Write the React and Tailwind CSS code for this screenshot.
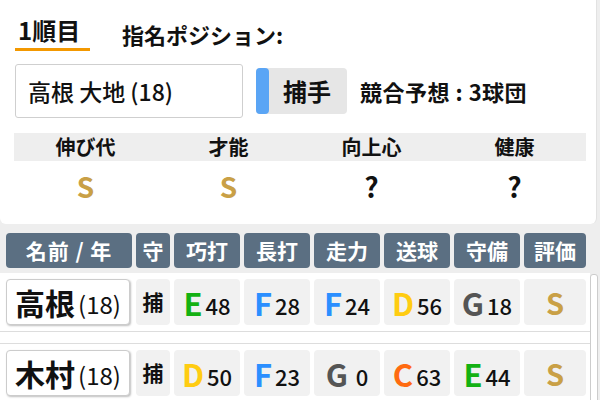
import React from "react";

const FONT = { fontFamily: '"Noto Sans CJK JP", "Noto Sans", sans-serif' };

const gradeColor = {
  S: "text-[#c9a046]",
  E: "text-[#13b113]",
  F: "text-[#2b8fff]",
  D: "text-[#ffcc11]",
  C: "text-[#ff6a10]",
  G: "text-[#555555]",
};

const rows = [
  { name: "高根", age: "(18)", pos: "捕", stats: [["E", "48"], ["F", "28"], ["F", "24"], ["D", "56"], ["G", "18"]], eval: "S" },
  { name: "木村", age: "(18)", pos: "捕", stats: [["D", "50"], ["F", "23"], ["G", " 0"], ["C", "63"], ["E", "44"]], eval: "S" },
];

function Header() {
  const h = "h-[35px] rounded-[4px] bg-[#5b6f82] text-white text-[21px] font-bold flex items-center justify-center leading-none";
  return (
    <div className="flex pl-[6px] gap-[4px] mt-[9px]">
      <div className={`${h} w-[126px] tracking-[1px]`}>名前 / 年</div>
      <div className={`${h} w-[34px]`}>守</div>
      <div className={`${h} w-[66px]`}>巧打</div>
      <div className={`${h} w-[66px]`}>長打</div>
      <div className={`${h} w-[66px]`}>走力</div>
      <div className={`${h} w-[66px]`}>送球</div>
      <div className={`${h} w-[66px]`}>守備</div>
      <div className={`${h} w-[62px]`}>評価</div>
    </div>
  );
}

function Row({ r, first }) {
  const cell = "h-[46px] rounded-[4px] bg-[#f1f1f1] flex items-center justify-center";
  return (
    <div className={`flex pl-[6px] gap-[4px] py-[6px] ${first ? "border-b border-[#dddddd]" : "border-t border-[#dddddd]"}`}>
      <div className="w-[124px] mr-[2px] h-[46px] rounded-[4px] bg-white border border-[#cccccc] shadow-[1px_1px_2px_rgba(0,0,0,0.25)] flex items-center justify-center">
        <span className="text-[30px] font-bold text-[#111] leading-none">{r.name}</span>
        <span className="text-[24px] text-[#111] leading-none ml-[3px] mt-[4px]">{r.age}</span>
      </div>
      <div className={`${cell} w-[34px] text-[21px] font-bold text-[#111]`}>{r.pos}</div>
      {r.stats.map(([g, n], i) => (
        <div key={i} className={`${cell} w-[66px]`}>
          <span className={`text-[31px] font-bold leading-none ${gradeColor[g]}`}>{g}</span>
          <span className="text-[22px] font-medium text-[#111] leading-none ml-[3px] mt-[6px] whitespace-pre">{n}</span>
        </div>
      ))}
      <div className={`${cell} w-[62px]`}>
        <span className={`text-[29px] font-bold leading-none ${gradeColor[r.eval]}`}>{r.eval}</span>
      </div>
    </div>
  );
}

export default function App() {
  return (
    <div className="w-[600px] h-[400px] bg-[#eeeeee] overflow-hidden" style={FONT}>
      <div className="w-[597px] h-[224px] bg-white rounded-b-[6px] border-r border-[#e2e2e2]">
        <div className="flex items-end pt-[14px] pl-[15px]">
          <div className="w-[75px] border-b-[3px] border-[#f39800] pb-[2px] pl-[3px] text-[24px] font-bold text-[#111] leading-[32px]">1順目</div>
          <div className="ml-[32px] pb-[3px] text-[22px] font-bold text-[#111] leading-[28px]">指名ポジション:</div>
        </div>
        <div className="flex items-center pl-[15px] mt-[13px]">
          <div className="w-[228px] h-[54px] border border-[#cfcfcf] rounded-[3px] flex items-center pl-[12px] text-[23px] font-medium text-[#111]">
            高根 大地 (18)
          </div>
          <div className="ml-[13px] w-[91px] h-[46px] rounded-[4px] bg-[#e6e6e6] flex items-center">
            <div className="w-[13px] h-[46px] rounded-[4px] bg-[#5aa5f5]"></div>
            <div className="flex-1 text-center text-[24px] font-bold text-[#111] pr-[2px]">捕手</div>
          </div>
          <div className="ml-[13px] text-[22px] font-bold text-[#111] whitespace-nowrap tracking-[0.5px]">競合予想 : 3球団</div>
        </div>
        <div className="mx-[14px] w-[572px] mt-[15px]">
          <div className="grid grid-cols-4 h-[28px] bg-[#eeeeee] items-center text-[20px] font-bold text-[#111] leading-none">
            <div className="text-center">伸び代</div>
            <div className="text-center">才能</div>
            <div className="text-center">向上心</div>
            <div className="text-center">健康</div>
          </div>
          <div className="grid grid-cols-4 h-[50px] items-center text-[28px] font-bold leading-none">
            <div className="text-center text-[#c9a046]">S</div>
            <div className="text-center text-[#c9a046]">S</div>
            <div className="text-center text-[#111]">?</div>
            <div className="text-center text-[#111]">?</div>
          </div>
        </div>
      </div>
      <Header />
      <div className="flex mt-[5px]">
        <div className="w-[590px] bg-white">
          <Row r={rows[0]} first />
          <div className="h-[11px]"></div>
          <Row r={rows[1]} />
        </div>
        <div className="w-[8px] h-[130px] mt-[1px] bg-white border border-[#cccccc] rounded-t-[3px]"></div>
      </div>
    </div>
  );
}
